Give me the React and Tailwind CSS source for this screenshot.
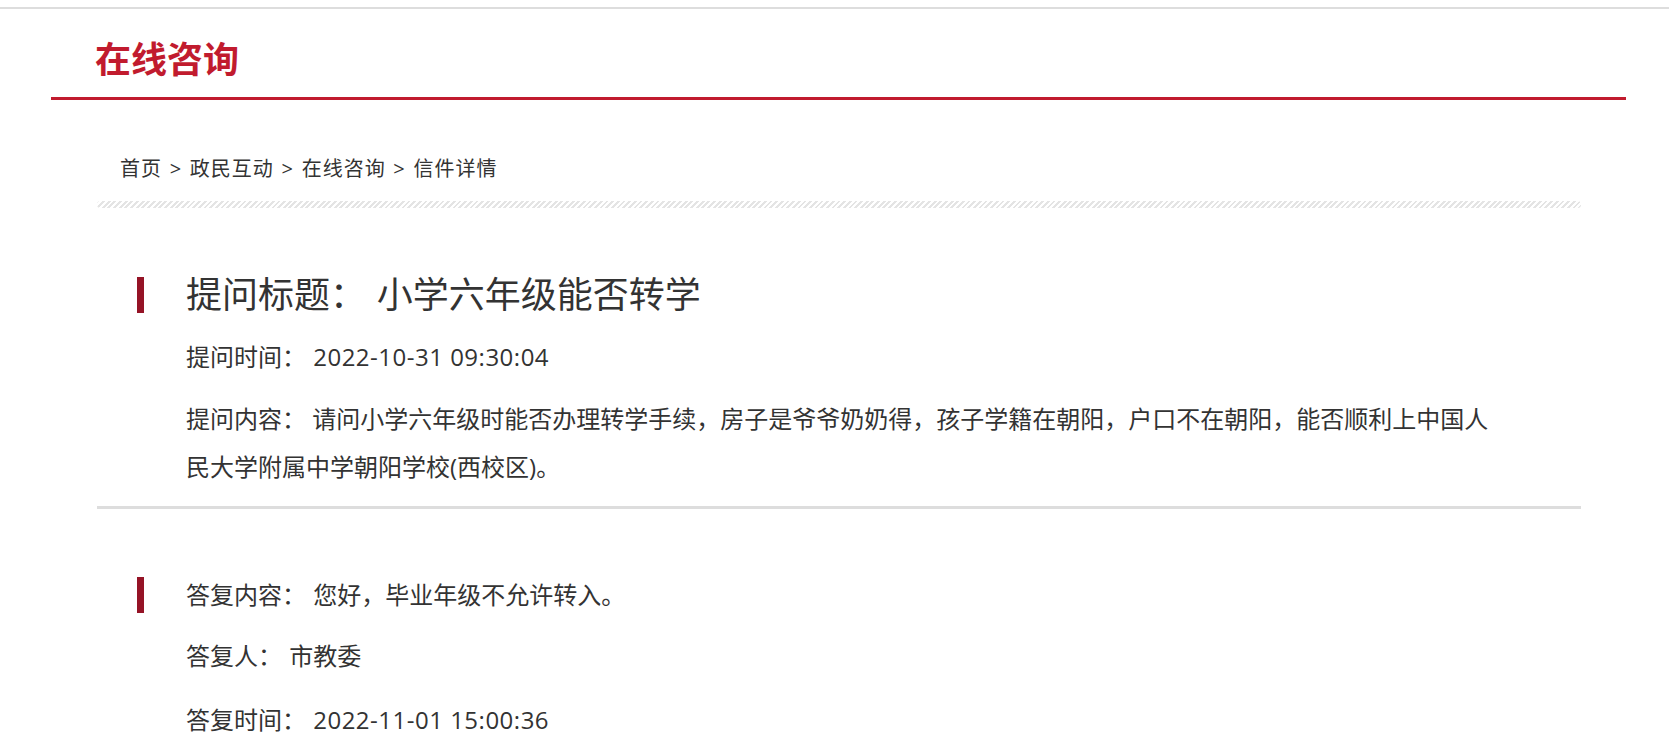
const font = { fontFamily: '"Open Sans", "Noto Sans CJK SC", sans-serif' };

function Row({ label, children, className = "", valueClass = "" }) {
  return (
    <div className={"pl-[89px] pr-[81px] text-[24px] leading-[48px] text-[#333] " + className}>
      {label}：<span className={"pl-[0.3em] " + valueClass}>{children}</span>
    </div>
  );
}

function FirstRow({ label, children, big }) {
  return (
    <div className="flex h-[36px] items-center pl-[40px]">
      <div className="h-[36px] w-[7px] shrink-0 bg-[#951326]" />
      <div
        className={
          "ml-[42px] text-[#333] " +
          (big ? "text-[36px] leading-[36px]" : "text-[24px] leading-[36px]")
        }
      >
        {label}：<span className="pl-[0.3em]">{children}</span>
      </div>
    </div>
  );
}

const crumbs = ["首页", "政民互动", "在线咨询", "信件详情"];

export default function App() {
  const question = {
    title: "小学六年级能否转学",
    time: "2022-10-31 09:30:04",
    content:
      "请问小学六年级时能否办理转学手续，房子是爷爷奶奶得，孩子学籍在朝阳，户口不在朝阳，能否顺利上中国人民大学附属中学朝阳学校(西校区)。",
  };
  const answer = {
    content: "您好，毕业年级不允许转入。",
    person: "市教委",
    time: "2022-11-01 15:00:36",
  };

  return (
    <div className="min-h-screen bg-white" style={font}>
      <div className="h-[7px]" />
      <div className="h-[2px] bg-[#dddddd]" />

      <div className="ml-[51px] w-[1575px]">
        <div className="pl-[44px] pt-[33px] pb-[19px]">
          <h1 className="text-[36px] font-bold leading-[36px] text-[#c11b2e]">在线咨询</h1>
        </div>
        <div className="h-[3px] bg-[#c11b2e]" />

        <div className="ml-[46px] w-[1484px]">
          <div className="mt-[54px] pl-[23px] text-[20px] leading-[30px] tracking-[1px] text-[#333]">
            {crumbs.map((c, i) => (
              <span key={c}>
                {i > 0 && <span className="px-[1.5px]"> &gt; </span>}
                {c}
              </span>
            ))}
          </div>
          <div className="mt-[17px] h-[7px] rounded-[4px] bg-[repeating-linear-gradient(135deg,#e4e4e4_0px,#e4e4e4_2px,#ffffff_2px,#ffffff_4px)]" />

          <div className="mt-[69px]">
            <FirstRow label="提问标题" big>
              {question.title}
            </FirstRow>
            <Row label="提问时间" className="mt-[20px]" valueClass="tracking-[0.5px]">
              {question.time}
            </Row>
            <p className="mt-[14px] pl-[89px] pr-[81px] text-[24px] leading-[48px] text-[#333]">
              {"提问内容： " + question.content}
            </p>
          </div>

          <div className="mt-[15px] h-[3px] bg-[#dddddd]" />

          <div className="mt-[68px]">
            <FirstRow label="答复内容">{answer.content}</FirstRow>
            <Row label="答复人" className="mt-[19px]">
              {answer.person}
            </Row>
            <Row label="答复时间" className="mt-[16px]" valueClass="tracking-[0.5px]">
              {answer.time}
            </Row>
          </div>
        </div>
      </div>
    </div>
  );
}
